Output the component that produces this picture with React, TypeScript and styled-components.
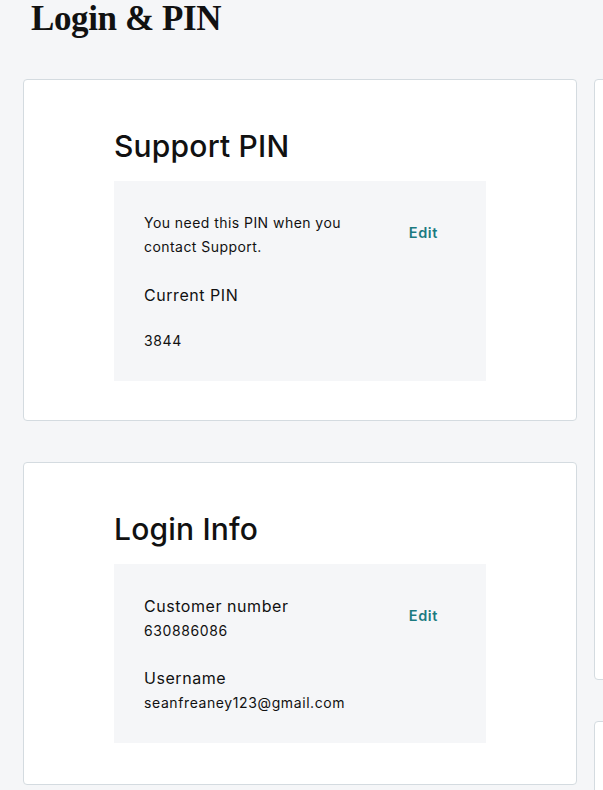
import React from "react";
import styled, { createGlobalStyle } from "styled-components";

const GlobalStyle = createGlobalStyle`
  html, body {
    margin: 0;
    padding: 0;
    background: #f5f6f8;
    overflow: hidden;
  }
  body {
    font-family: Inter, "Noto Sans", sans-serif;
    color: #111;
  }
`;

const Page = styled.div`
  width: 603px;
  height: 790px;
  overflow: hidden;
  background: #f5f6f8;
`;

const PageTitle = styled.h1`
  margin: 0;
  padding: 0 0 0 31px;
  height: 79px;
  font-family: "Liberation Serif", "DejaVu Serif", serif;
  font-weight: 700;
  font-size: 35px;
  line-height: 38px;
  letter-spacing: -0.4px;
  color: #111;
`;

const Grid = styled.div`
  display: grid;
  grid-template-columns: 554px 554px;
  column-gap: 17px;
  padding-left: 23px;
`;

const Column = styled.div`
  display: flex;
  flex-direction: column;
  gap: 41px;
`;

const Card = styled.section<{ $height?: number }>`
  box-sizing: border-box;
  background: #fff;
  border: 1px solid #d4dbe0;
  border-radius: 4px;
  padding: 40px 90px 40px 90px;
  height: ${(p) => (p.$height ? `${p.$height}px` : "auto")};
`;

const CardTitle = styled.h2`
  margin: 0 0 13px;
  font-size: 30px;
  font-weight: 500;
  line-height: 44px;
  letter-spacing: 0.2px;
  color: #111;
  padding-top: 4px;
`;

const Panel = styled.div<{ $height: number }>`
  box-sizing: border-box;
  background: #f5f6f8;
  height: ${(p) => p.$height}px;
  padding: 30px 48px 30px 30px;
  display: flex;
  justify-content: space-between;
  align-items: flex-start;
`;

const Fields = styled.div`
  display: flex;
  flex-direction: column;
`;

const Note = styled.p`
  margin: 0;
  width: 220px;
  font-size: 14px;
  line-height: 24px;
  letter-spacing: 0.45px;
  color: #111;
`;

const Label = styled.div<{ $gap?: number }>`
  margin-top: ${(p) => p.$gap ?? 0}px;
  font-size: 16px;
  line-height: 24px;
  letter-spacing: 0.55px;
  color: #111;
`;

const Value = styled.div<{ $gap?: number }>`
  margin-top: ${(p) => p.$gap ?? 0}px;
  font-size: 14px;
  line-height: 25px;
  letter-spacing: 0.6px;
  color: #111;
`;

const EditLink = styled.a`
  font-size: 14.5px;
  font-weight: 600;
  line-height: 24px;
  letter-spacing: 0.6px;
  color: #1b7a80;
  text-decoration: none;
  cursor: pointer;
  margin-top: 10px;
`;

export default function App() {
  return (
    <Page>
      <GlobalStyle />
      <PageTitle>Login &amp; PIN</PageTitle>
      <Grid>
        <Column>
          <Card $height={342}>
            <CardTitle>Support PIN</CardTitle>
            <Panel $height={200}>
              <Fields>
                <Note>You need this PIN when you contact Support.</Note>
                <Label $gap={24}>Current PIN</Label>
                <Value $gap={21}>3844</Value>
              </Fields>
              <EditLink>Edit</EditLink>
            </Panel>
          </Card>
          <Card $height={323}>
            <CardTitle>Login Info</CardTitle>
            <Panel $height={179}>
              <Fields>
                <Label>Customer number</Label>
                <Value>630886086</Value>
                <Label $gap={23}>Username</Label>
                <Value>seanfreaney123@gmail.com</Value>
              </Fields>
              <EditLink>Edit</EditLink>
            </Panel>
          </Card>
        </Column>
        <Column>
          <Card $height={601} />
          <Card $height={200} />
        </Column>
      </Grid>
    </Page>
  );
}
